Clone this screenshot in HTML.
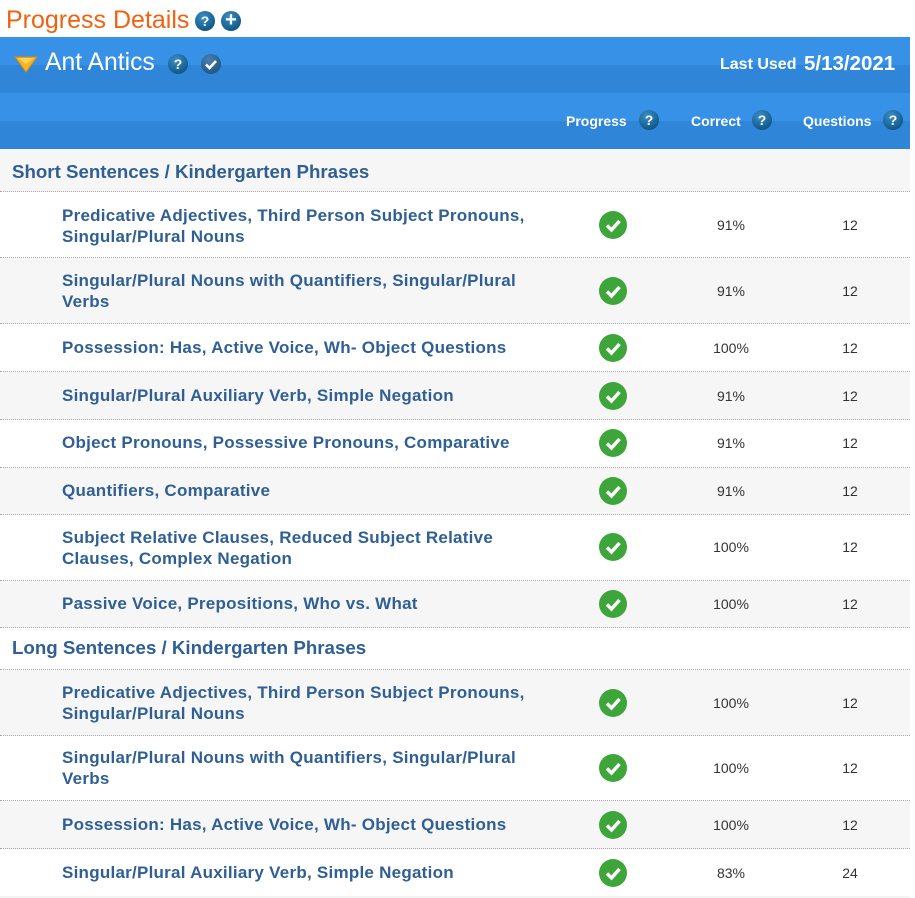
<!DOCTYPE html>
<html><head><meta charset="utf-8"><style>
*{margin:0;padding:0;box-sizing:border-box}
body{width:915px;height:898px;background:#fff;font-family:"Liberation Sans",Arial,sans-serif;overflow:hidden;position:relative}
.title{position:absolute;left:6px;top:5px;font-size:25px;color:#f0620f;line-height:30px}
.ic{position:absolute;width:20px;height:20px;border-radius:50%;background:radial-gradient(circle at 40% 30%,#3a8fc6,#145b8c 70%,#0e4469);color:#fff;font-weight:bold;font-size:14px;text-align:center;line-height:20px}
.band{position:absolute;left:0;width:910px;height:28px}
.l{background:#3791e6}.d{background:#2f86d8}
.hdr{position:absolute;color:#fff;font-weight:bold}
.row{position:absolute;left:0;width:910px;border-bottom:1px dotted #a8a8a8}
.g{background:#f6f6f6}
.txt{position:absolute;left:62px;color:#2f5f94;font-weight:bold;font-size:17px;letter-spacing:0.25px;line-height:21px;width:472px}
.sec{position:absolute;left:12px;color:#2f5f94;font-weight:bold;font-size:18.7px}
.ok{position:absolute;left:599px;width:28px;height:28px;border-radius:50%;background:#3ea53a}
.ok svg{position:absolute;left:0;top:0}
.num{position:absolute;font-size:14px;color:#333;width:60px;text-align:center}
</style></head><body>
<div class="title">Progress Details</div>
<div class="ic" style="left:195px;top:11px">?</div>
<div class="ic" style="left:221px;top:11px;font-size:20px;line-height:19px">+</div>
<div class="band l" style="top:37px"></div>
<div class="band d" style="top:65px"></div>
<div class="band l" style="top:93px"></div>
<div class="band d" style="top:121px"></div>
<svg style="position:absolute;left:14px;top:56px" width="24" height="18"><polygon points="1,1 23,1 12,16" fill="#f7b421" stroke="#d68a10" stroke-width="1"/><polygon points="4,2 20,2 12,8" fill="#fcd360"/></svg>
<div class="hdr" style="left:45px;top:49px;font-size:24.7px;font-weight:normal">Ant Antics</div>
<div class="ic" style="left:168px;top:54px">?</div>
<div class="ic" style="left:201px;top:54px;background:radial-gradient(circle at 40% 30%,#4a7fae,#245a8a 70%)"><svg width="20" height="20"><path d="M5 10.5l3.5 3.5 6.5-7" stroke="#fff" stroke-width="2.6" fill="none"/></svg></div>
<div class="hdr" style="left:720px;top:56px;font-size:16px">Last Used</div>
<div class="hdr" style="left:804px;top:52px;font-size:20.5px">5/13/2021</div>
<div class="hdr" style="left:566px;top:113px;font-size:14px">Progress</div>
<div class="ic" style="left:639px;top:110px">?</div>
<div class="hdr" style="left:691px;top:113px;font-size:14px">Correct</div>
<div class="ic" style="left:752px;top:110px">?</div>
<div class="hdr" style="left:803px;top:113px;font-size:14px">Questions</div>
<div class="ic" style="left:883px;top:110px">?</div>

<div class="row g" style="top:149px;height:43px"><div class="sec" style="top:12px">Short Sentences / Kindergarten Phrases</div></div>

<div class="row" style="top:192px;height:66px"><div class="txt" style="top:13px">Predicative Adjectives, Third Person Subject Pronouns, Singular/Plural Nouns</div><div class="ok" style="top:19px"><svg width="28" height="28"><path d="M8 14.5l4.5 4.5 8-9" stroke="#fff" stroke-width="3.5" fill="none"/></svg></div><div class="num" style="left:701px;top:25px">91%</div><div class="num" style="left:820px;top:25px">12</div></div>
<div class="row g" style="top:258px;height:66px"><div class="txt" style="top:12px">Singular/Plural Nouns with Quantifiers, Singular/Plural Verbs</div><div class="ok" style="top:19px"><svg width="28" height="28"><path d="M8 14.5l4.5 4.5 8-9" stroke="#fff" stroke-width="3.5" fill="none"/></svg></div><div class="num" style="left:701px;top:25px">91%</div><div class="num" style="left:820px;top:25px">12</div></div>
<div class="row" style="top:324px;height:48px"><div class="txt" style="top:13px">Possession: Has, Active Voice, Wh- Object Questions</div><div class="ok" style="top:10px"><svg width="28" height="28"><path d="M8 14.5l4.5 4.5 8-9" stroke="#fff" stroke-width="3.5" fill="none"/></svg></div><div class="num" style="left:701px;top:16px">100%</div><div class="num" style="left:820px;top:16px">12</div></div>
<div class="row g" style="top:372px;height:48px"><div class="txt" style="top:13px">Singular/Plural Auxiliary Verb, Simple Negation</div><div class="ok" style="top:10px"><svg width="28" height="28"><path d="M8 14.5l4.5 4.5 8-9" stroke="#fff" stroke-width="3.5" fill="none"/></svg></div><div class="num" style="left:701px;top:16px">91%</div><div class="num" style="left:820px;top:16px">12</div></div>
<div class="row" style="top:420px;height:48px"><div class="txt" style="top:12px">Object Pronouns, Possessive Pronouns, Comparative</div><div class="ok" style="top:9px"><svg width="28" height="28"><path d="M8 14.5l4.5 4.5 8-9" stroke="#fff" stroke-width="3.5" fill="none"/></svg></div><div class="num" style="left:701px;top:15px">91%</div><div class="num" style="left:820px;top:15px">12</div></div>
<div class="row g" style="top:468px;height:47px"><div class="txt" style="top:12px">Quantifiers, Comparative</div><div class="ok" style="top:9px"><svg width="28" height="28"><path d="M8 14.5l4.5 4.5 8-9" stroke="#fff" stroke-width="3.5" fill="none"/></svg></div><div class="num" style="left:701px;top:15px">91%</div><div class="num" style="left:820px;top:15px">12</div></div>
<div class="row" style="top:515px;height:66px"><div class="txt" style="top:12px">Subject Relative Clauses, Reduced Subject Relative Clauses, Complex Negation</div><div class="ok" style="top:18px"><svg width="28" height="28"><path d="M8 14.5l4.5 4.5 8-9" stroke="#fff" stroke-width="3.5" fill="none"/></svg></div><div class="num" style="left:701px;top:24px">100%</div><div class="num" style="left:820px;top:24px">12</div></div>
<div class="row g" style="top:581px;height:47px"><div class="txt" style="top:12px">Passive Voice, Prepositions, Who vs. What</div><div class="ok" style="top:9px"><svg width="28" height="28"><path d="M8 14.5l4.5 4.5 8-9" stroke="#fff" stroke-width="3.5" fill="none"/></svg></div><div class="num" style="left:701px;top:15px">100%</div><div class="num" style="left:820px;top:15px">12</div></div>

<div class="row" style="top:628px;height:42px"><div class="sec" style="top:9px">Long Sentences / Kindergarten Phrases</div></div>

<div class="row g" style="top:670px;height:66px"><div class="txt" style="top:12px">Predicative Adjectives, Third Person Subject Pronouns, Singular/Plural Nouns</div><div class="ok" style="top:19px"><svg width="28" height="28"><path d="M8 14.5l4.5 4.5 8-9" stroke="#fff" stroke-width="3.5" fill="none"/></svg></div><div class="num" style="left:701px;top:25px">100%</div><div class="num" style="left:820px;top:25px">12</div></div>
<div class="row" style="top:736px;height:65px"><div class="txt" style="top:11px">Singular/Plural Nouns with Quantifiers, Singular/Plural Verbs</div><div class="ok" style="top:18px"><svg width="28" height="28"><path d="M8 14.5l4.5 4.5 8-9" stroke="#fff" stroke-width="3.5" fill="none"/></svg></div><div class="num" style="left:701px;top:24px">100%</div><div class="num" style="left:820px;top:24px">12</div></div>
<div class="row g" style="top:801px;height:48px"><div class="txt" style="top:13px">Possession: Has, Active Voice, Wh- Object Questions</div><div class="ok" style="top:10px"><svg width="28" height="28"><path d="M8 14.5l4.5 4.5 8-9" stroke="#fff" stroke-width="3.5" fill="none"/></svg></div><div class="num" style="left:701px;top:16px">100%</div><div class="num" style="left:820px;top:16px">12</div></div>
<div class="row" style="top:849px;height:47px;border-bottom:none"><div class="txt" style="top:13px">Singular/Plural Auxiliary Verb, Simple Negation</div><div class="ok" style="top:10px"><svg width="28" height="28"><path d="M8 14.5l4.5 4.5 8-9" stroke="#fff" stroke-width="3.5" fill="none"/></svg></div><div class="num" style="left:701px;top:16px">83%</div><div class="num" style="left:820px;top:16px">24</div></div>
<div style="position:absolute;top:896px;left:0;width:910px;height:2px;background:#f3f3f3"></div>
</body></html>
